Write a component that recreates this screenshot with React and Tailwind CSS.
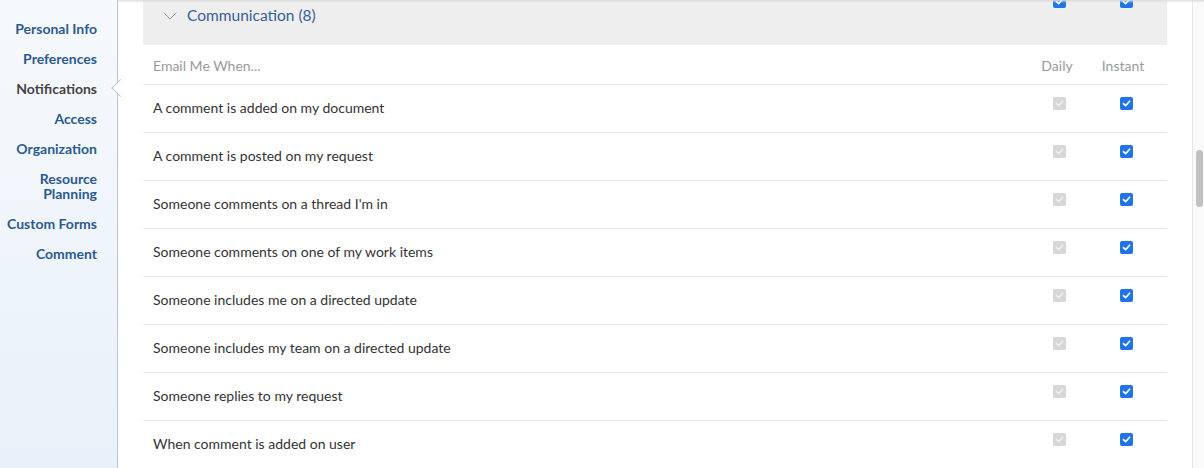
import React from 'react';

const NAV = [
  { label: 'Personal Info' },
  { label: 'Preferences' },
  { label: 'Notifications', active: true },
  { label: 'Access' },
  { label: 'Organization' },
  { label: ['Resource', 'Planning'] },
  { label: 'Custom Forms' },
  { label: 'Comment' },
];

const ROWS = [
  'A comment is added on my document',
  'A comment is posted on my request',
  "Someone comments on a thread I'm in",
  'Someone comments on one of my work items',
  'Someone includes me on a directed update',
  'Someone includes my team on a directed update',
  'Someone replies to my request',
  'When comment is added on user',
];

function Check({ disabled }) {
  return (
    <span className={`w-[13px] h-[13px] rounded-[2px] flex items-center justify-center ${disabled ? 'bg-[#d6d6d6]' : 'bg-[#1f74e6]'}`}>
      <svg width="9" height="9" viewBox="0 0 10 10" fill="none">
        <path d="M1.6 5.2 L4 7.5 L8.4 2.4" stroke={disabled ? '#f0f0f0' : '#ffffff'} strokeWidth="1.8" strokeLinecap="round" strokeLinejoin="round" />
      </svg>
    </span>
  );
}

export default function App() {
  return (
    <div className="w-[1204px] h-[468px] flex overflow-hidden bg-white text-[#333]" style={{ fontFamily: 'Lato, "Liberation Sans", sans-serif' }}>
      {/* Sidebar */}
      <aside className="relative z-10 w-[118px] shrink-0 border-r border-[#b3c7d9] bg-gradient-to-b from-[#f6f9fc] to-[#e8f1f9] pt-[13px]">
        {NAV.map((n, i) => (
          <div key={i} className={`relative text-right pr-[20px] py-[7.5px] text-[14px] font-bold leading-[15px] ${n.active ? 'text-[#444]' : 'text-[#2c5a8e]'}`}>
            {Array.isArray(n.label) ? n.label.map(l => <div key={l}>{l}</div>) : n.label}
            {n.active && (
              <span className="absolute right-[-9.5px] top-1/2 -translate-y-1/2 w-[13px] h-[13px] rotate-45 bg-white border-l border-b border-[#b3c7d9]" />
            )}
          </div>
        ))}
      </aside>

      {/* Main */}
      <main className="relative flex-1 flex min-w-0">
        <div className="absolute top-0 inset-x-0 h-[3px] bg-gradient-to-b from-[#dcdcdc] to-transparent z-10" />
        <div className="flex-1 px-[25px] min-w-0">
          {/* Section header */}
          <div className="relative h-[45px] bg-[#eeeeee] flex items-start">
            <div className="flex items-center h-[31px] pl-[20px]">
              <svg width="14" height="8" viewBox="0 0 14 8" fill="none" className="mr-[10px]">
                <path d="M0.5 0.5 L7 7 L13.5 0.5" stroke="#8ea3c2" strokeWidth="1" />
              </svg>
              <span className="text-[15.5px] text-[#3b5f94]">Communication (8)</span>
            </div>
            <div className="ml-auto flex -mt-[5px]">
              <div className="w-[66px] flex justify-center"><Check /></div>
              <div className="w-[68px] flex justify-center"><Check /></div>
              <div className="w-[7px]" />
            </div>
          </div>

          {/* Column labels */}
          <div className="flex items-center h-[40px] pt-[1px] border-b border-[#e6e6e6] text-[14px] text-[#9a9a9a]">
            <div className="flex-1 pl-[10px]">Email Me When...</div>
            <div className="w-[66px] text-center pr-[4px]">Daily</div>
            <div className="w-[68px] text-center pr-[6px]">Instant</div>
            <div className="w-[7px]" />
          </div>

          {ROWS.map(r => (
            <div key={r} className="flex items-center h-[48px] pb-[2px] border-b border-[#e6e6e6] text-[14px]">
              <div className="flex-1 pl-[10px]">{r}</div>
              <div className="w-[66px] flex justify-center -mt-[9px]"><Check disabled /></div>
              <div className="w-[68px] flex justify-center -mt-[9px]"><Check /></div>
              <div className="w-[7px]" />
            </div>
          ))}
        </div>

        {/* Scrollbar */}
        <div className="w-[12px] shrink-0 border-l border-[#e6e6e6] bg-[#fafafa] pt-[150px] pl-[3px]">
          <div className="w-[7px] h-[57px] rounded-full bg-[#c1c1c1]" />
        </div>
      </main>
    </div>
  );
}
